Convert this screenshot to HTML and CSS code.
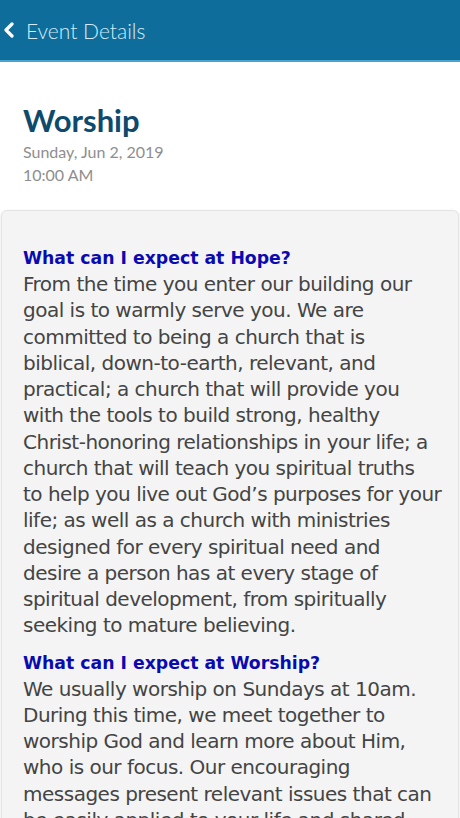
FILE: index.html
```html
<!DOCTYPE html>
<html lang="en">
<head>
    <meta charset="UTF-8" />
    <meta name="viewport" content="width=device-width, initial-scale=1.0" />
    <title>Event Details</title>
    <link rel="stylesheet" href="styles.css">
</head>
<body>
    <header class="topbar">
        <svg class="back-icon" width="12" height="16" viewBox="0 0 12 16">
            <path d="M9 2 L3 8 L9 14" fill="none" stroke="#ffffff" stroke-width="3.2" stroke-linecap="round" stroke-linejoin="round"/>
        </svg>
        <span class="topbar-title">Event Details</span>
    </header>

    <section class="event-head">
        <h1 class="event-title">Worship</h1>
        <div class="event-meta">Sunday, Jun 2, 2019</div>
        <div class="event-meta">10:00 AM</div>
    </section>

    <section class="event-card">
        <h2 class="card-heading">What can I expect at Hope?</h2>
        <p class="card-text">From the time you enter our building our<br>
            goal is to warmly serve you. We are<br>
            committed to being a church that is<br>
            biblical, down-to-earth, relevant, and<br>
            practical; a church that will provide you<br>
            with the tools to build strong, healthy<br>
            Christ-honoring relationships in your life; a<br>
            church that will teach you spiritual truths<br>
            to help you live out God’s purposes for your<br>
            life; as well as a church with ministries<br>
            designed for every spiritual need and<br>
            desire a person has at every stage of<br>
            spiritual development, from spiritually<br>
            seeking to mature believing.</p>
        <h2 class="card-heading">What can I expect at Worship?</h2>
        <p class="card-text">We usually worship on Sundays at 10am.<br>
            During this time, we meet together to<br>
            worship God and learn more about Him,<br>
            who is our focus. Our encouraging<br>
            messages present relevant issues that can<br>
            be easily applied to your life and shared<br>
            with others.</p>
    </section>
</body>
</html>
```

FILE: styles.css
```css
body {
    margin: 0;
    padding: 0;
    background: #ffffff;
    font-family: Lato, "Open Sans", sans-serif;
    overflow: hidden;
}
.topbar {
    height: 60px;
    background: #0f6d9b;
    border-bottom: 2px solid #4ba3d0;
    display: flex;
    align-items: center;
    padding-left: 3px;
    box-sizing: content-box;
}
.back-icon {
    margin-right: 11px;
}
.topbar-title {
    color: #d4ecf8;
    font-size: 21px;
    font-weight: 300;
}
.event-head {
    padding: 38px 23px 24px;
}
.event-title {
    margin: 0;
    color: #0e4a6c;
    font-size: 31px;
    font-weight: 700;
    line-height: 40px;
}
.event-meta {
    color: #8e8e8e;
    font-size: 16px;
    font-weight: 400;
    line-height: 23px;
}
.event-card {
    margin: 0 1px;
    background: #f4f4f4;
    border: 1px solid #e4e4e4;
    border-radius: 6px;
    box-shadow: 0 1px 3px rgba(0, 0, 0, 0.12);
    padding: 34px 12px 20px 21px;
    min-height: 700px;
}
.card-heading {
    margin: 0;
    color: #0a0ab0;
    font-family: "DejaVu Sans", Verdana, sans-serif;
    font-size: 17.3px;
    font-weight: 700;
    line-height: 26px;
}
.card-text {
    margin: 0 0 11px;
    color: #444444;
    font-family: "DejaVu Sans", Verdana, sans-serif;
    font-size: 20px;
    line-height: 26.25px;
    letter-spacing: -0.5px;
}
```
